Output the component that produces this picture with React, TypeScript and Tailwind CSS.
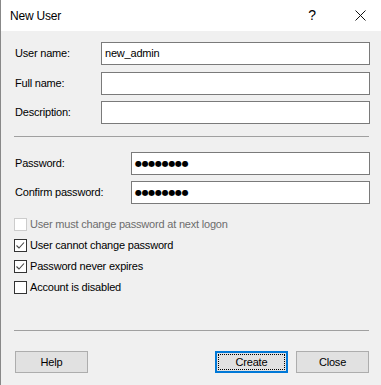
import React from "react";

const font = { fontFamily: '"Liberation Sans", Arial, sans-serif' };

function Field({ label, value, labelW, dots }: { label: string; value?: string; labelW: string; dots?: boolean }) {
  return (
    <div className="flex items-center h-[23px]">
      <div className={`${labelW} pl-[1px] shrink-0`}>{label}</div>
      <div className="flex-1 h-[23px] bg-white border border-[#7a7a7a] flex items-center pl-[3px]">
        {dots ? (
          <span className="text-[8px] tracking-[-0.3px] leading-none" style={{ fontFamily: '"DejaVu Sans", sans-serif' }}>
            ●●●●●●●●
          </span>
        ) : (
          value
        )}
      </div>
    </div>
  );
}

function Check({ label, checked, disabled }: { label: string; checked?: boolean; disabled?: boolean }) {
  return (
    <div className="flex items-center h-[21px]">
      <div
        className={`w-[13px] h-[13px] bg-white border shrink-0 ${disabled ? "border-[#cccccc]" : "border-[#333333]"}`}
      >
        {checked && (
          <svg width="11" height="11" viewBox="0 0 11 11">
            <polyline points="1.5,5.5 4,8 9,2.5" fill="none" stroke="#444444" strokeWidth="1.1" />
          </svg>
        )}
      </div>
      <span className={`ml-[3px] ${disabled ? "text-[#6d6d6d]" : "text-black"}`}>{label}</span>
    </div>
  );
}

export default function App() {
  return (
    <div
      className="w-[381px] h-[385px] flex flex-col border-l border-[#888888] text-[11px] tracking-[-0.2px] text-black overflow-hidden"
      style={font}
    >
      {/* Title bar */}
      <div className="h-[31px] bg-white flex items-center shrink-0">
        <div className="pl-[9px] text-[12px] flex-1">New User</div>
        <div className="w-[46px] text-center text-[14px] mr-[2px]">?</div>
        <div className="w-[46px] flex justify-center mr-[-2px]">
          <svg width="11" height="11" viewBox="0 0 11 11">
            <path d="M0.5 0.5 L10.5 10.5 M10.5 0.5 L0.5 10.5" stroke="#111111" strokeWidth="1" />
          </svg>
        </div>
      </div>

      {/* Body */}
      <div className="flex-1 bg-[#f0f0f0] pl-[13px] pr-[11px] pt-[11px] flex flex-col">
        <div className="flex flex-col gap-[6.5px]">
          <Field label="User name:" value="new_admin" labelW="w-[87px]" />
          <Field label="Full name:" labelW="w-[87px]" />
          <Field label="Description:" labelW="w-[87px]" />
        </div>

        <div className="mt-[12px] border-t border-[#a0a0a0] mr-[1px]" />

        <div className="mt-[15px] flex flex-col gap-[6px]">
          <Field label="Password:" labelW="w-[117px]" dots />
          <Field label="Confirm password:" labelW="w-[117px]" dots />
        </div>

        <div className="mt-[10px] flex flex-col">
          <Check label="User must change password at next logon" disabled />
          <Check label="User cannot change password" checked />
          <Check label="Password never expires" checked />
          <Check label="Account is disabled" />
        </div>

        <div className="mt-[32px] border-t border-[#a0a0a0] mr-[1px]" />

        <div className="mt-[20px] flex items-center pl-[1px]">
          <button className="w-[73px] h-[22px] bg-[#e1e1e1] border border-[#adadad]">Help</button>
          <div className="flex-1" />
          <button className="w-[73px] h-[22px] bg-[#e1e1e1] border-2 border-[#0078d7] p-[1px]">
            <div className="w-full h-full border border-dotted border-black flex items-center justify-center">
              Create
            </div>
          </button>
          <button className="ml-[8px] mr-[1px] w-[73px] h-[22px] bg-[#e1e1e1] border border-[#adadad]">Close</button>
        </div>
      </div>
    </div>
  );
}
